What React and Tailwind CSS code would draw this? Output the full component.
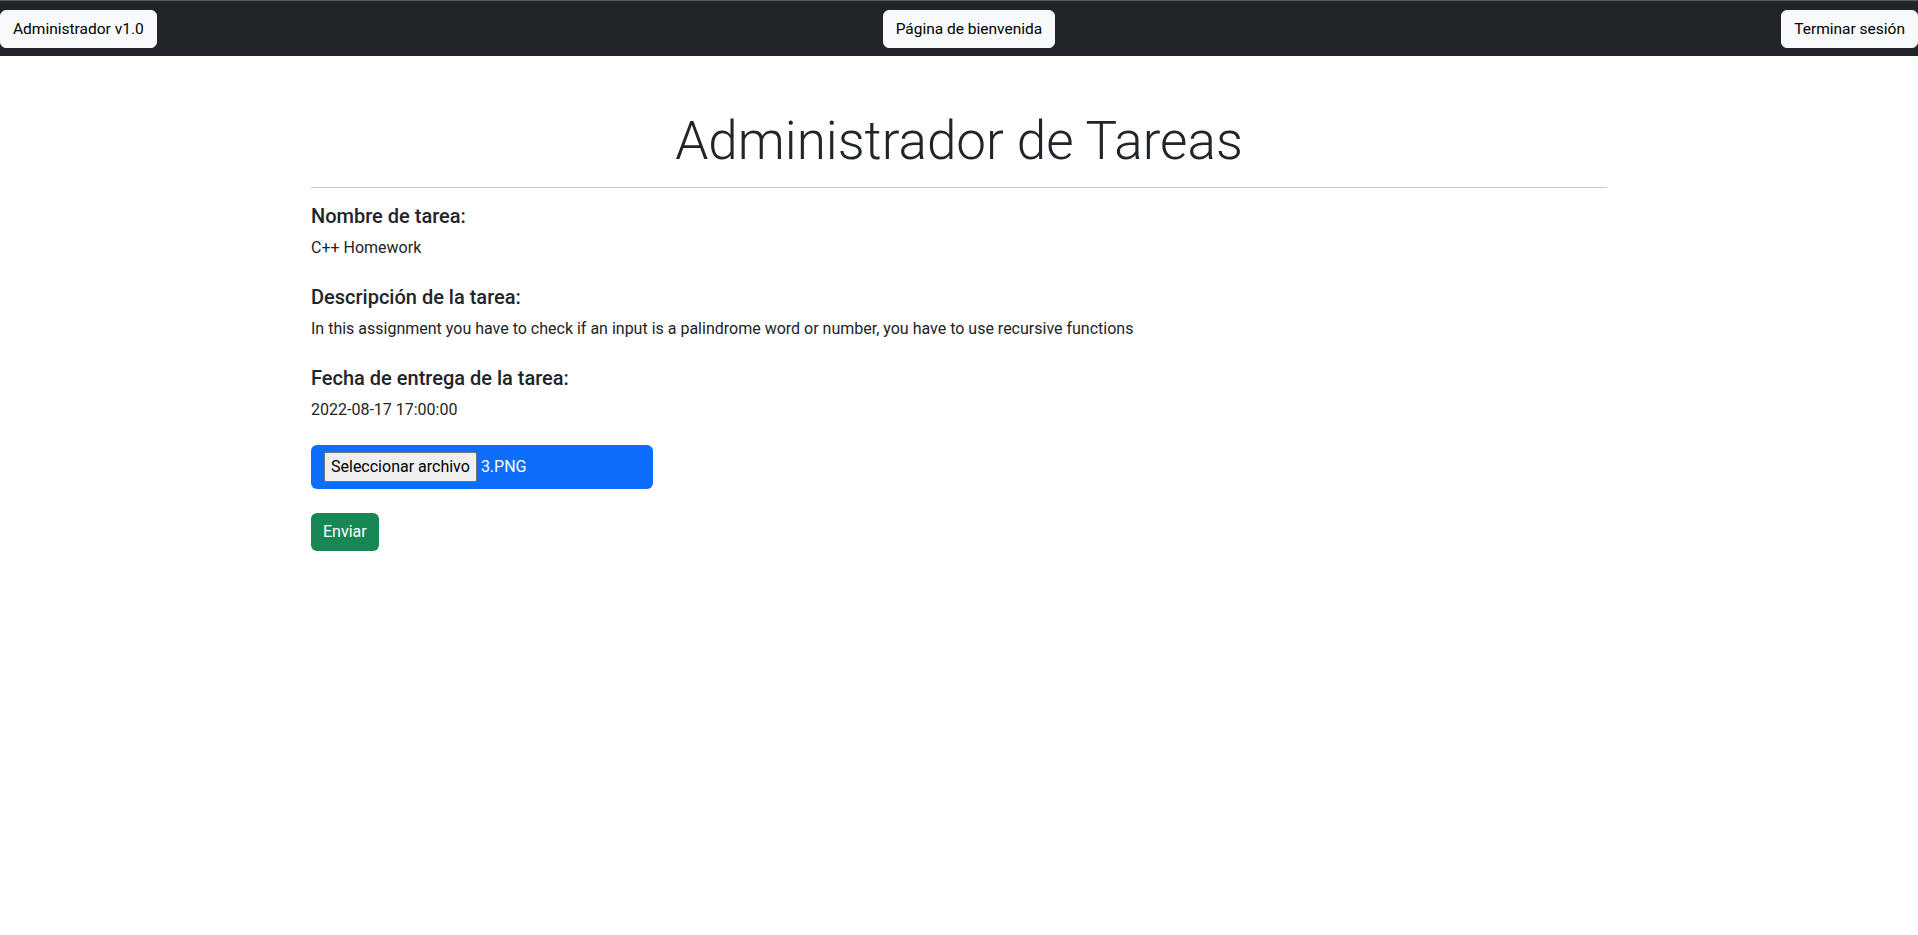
import React from 'react';

const NavButton = ({ children }) => (
    <button className="h-[38px] px-3 rounded-md bg-[#f8f9fa] border border-[#f8f9fa] text-black text-[15.5px] leading-6">
        {children}
    </button>
);

const Field = ({ label, value, gap = 'mb-[25px]' }) => (
    <div className={gap}>
        <h5 className="text-[20px] leading-6 font-medium text-[#212529] mb-2">{label}</h5>
        <p className="text-[16px] leading-6 text-[#212529]">{value}</p>
    </div>
);

export default function App() {
    return (
        <div className="min-h-screen bg-white font-['Roboto','Liberation_Sans',sans-serif] text-[#212529]">
            <nav className="h-[56px] bg-[#212529] border-t border-[#5c5c5c] flex items-center justify-between">
                <NavButton>Administrador v1.0</NavButton>
                <NavButton>Página de bienvenida</NavButton>
                <NavButton>Terminar sesión</NavButton>
            </nav>

            <main className="w-[1296px] mx-auto pt-[52px]">
                <h1 className="text-[53px] leading-[67px] font-light text-center text-[#212529]">
                    Administrador de Tareas
                </h1>
                <hr className="mt-[12px] mb-4 border-t border-[#c8c9ca]" />

                <Field label="Nombre de tarea:" value="C++ Homework" />
                <Field
                    label="Descripción de la tarea:"
                    value="In this assignment you have to check if an input is a palindrome word or number, you have to use recursive functions"
                />
                <Field label="Fecha de entrega de la tarea:" value="2022-08-17 17:00:00" gap="mb-[23px]" />

                <div className="w-[342px] h-[44px] rounded-md bg-[#0d6efd] flex items-center pl-[13px]">
                    <div className="h-[30px] px-[6px] flex items-center bg-[#efefef] border border-[#767676] rounded-[2px] text-black text-[16px]">
                        Seleccionar archivo
                    </div>
                    <span className="ml-[4px] text-white text-[16px]">3.PNG</span>
                </div>

                <button className="mt-[24px] h-[38px] px-3 rounded-md bg-[#198754] text-white text-[16px] leading-6">
                    Enviar
                </button>
            </main>
        </div>
    );
}
